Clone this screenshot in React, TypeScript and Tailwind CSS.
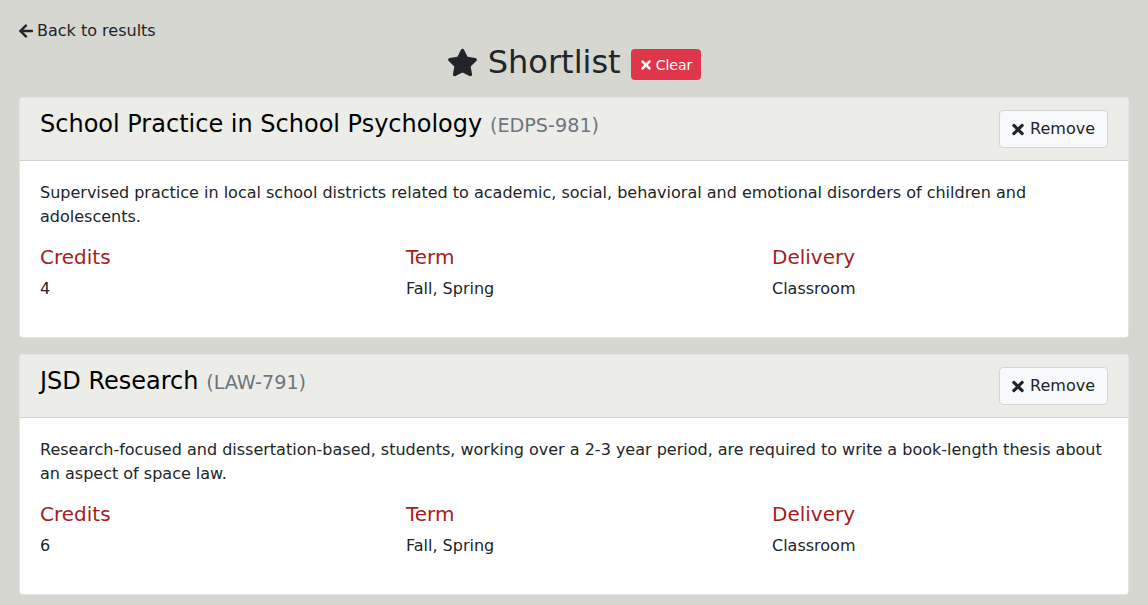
import { FaArrowLeft, FaStar, FaTimes } from "react-icons/fa";

type Course = {
  title: string;
  code: string;
  description: string;
  credits: string;
  term: string;
  delivery: string;
};

const courses: Course[] = [
  {
    title: "School Practice in School Psychology",
    code: "EDPS-981",
    description:
      "Supervised practice in local school districts related to academic, social, behavioral and emotional disorders of children and adolescents.",
    credits: "4",
    term: "Fall, Spring",
    delivery: "Classroom",
  },
  {
    title: "JSD Research",
    code: "LAW-791",
    description:
      "Research-focused and dissertation-based, students, working over a 2-3 year period, are required to write a book-length thesis about an aspect of space law.",
    credits: "6",
    term: "Fall, Spring",
    delivery: "Classroom",
  },
];

function Detail(props: { label: string; value: string }) {
  return (
    <div>
      <h5 className="text-[20px] leading-[24px] text-[#a51d1d] mb-2">
        {props.label}
      </h5>
      <p className="mb-4">{props.value}</p>
    </div>
  );
}

function CourseCard(props: { c: Course }) {
  const { c } = props;
  return (
    <div className="mb-4 bg-white border border-[rgba(0,0,0,0.1)] rounded">
      <div className="flex items-start justify-between px-5 py-3 bg-[#ecede9] border-b border-[rgba(0,0,0,0.12)] rounded-t">
        <h3 className="text-[24px] leading-[29px] text-black">
          {c.title}{" "}
          <small className="text-[19.2px] text-[#6c757d]">({c.code})</small>
        </h3>
        <button className="flex items-center gap-[6px] h-[38px] px-3 bg-[#f8f9fa] border border-[#d3d5d7] rounded text-[16px] text-[#212529]">
          <FaTimes className="w-[12px] h-[17px]" />
          Remove
        </button>
      </div>
      <div className="p-5">
        <p className="mb-4">{c.description}</p>
        <div className="grid grid-cols-3 gap-x-[30px]">
          <Detail label="Credits" value={c.credits} />
          <Detail label="Term" value={c.term} />
          <Detail label="Delivery" value={c.delivery} />
        </div>
      </div>
    </div>
  );
}

export default function App() {
  return (
    <div
      className="min-h-screen bg-[#d6d7d1] px-[19px] pt-[19px] text-[16px] leading-6 text-[#212529]"
      style={{ fontFamily: '"DejaVu Sans", sans-serif' }}
    >
      <a href="#" className="flex items-center gap-[4px] text-[#212529]">
        <FaArrowLeft className="w-[14px] h-[16px]" />
        Back to results
      </a>
      <div className="flex justify-center items-center mb-4">
        <h2 className="flex items-center gap-[10px] text-[32px] leading-[38px] text-[#212529]">
          <FaStar size={31} />
          Shortlist
        </h2>
        <button className="ml-[10px] mt-[5px] flex items-center gap-[5px] h-[31px] pl-[10px] pr-[9px] bg-[#e0364a] rounded text-[14px] text-white">
          <FaTimes className="w-[10px] h-[14px]" />
          Clear
        </button>
      </div>
      {courses.map((c) => (
        <CourseCard key={c.code} c={c} />
      ))}
    </div>
  );
}
